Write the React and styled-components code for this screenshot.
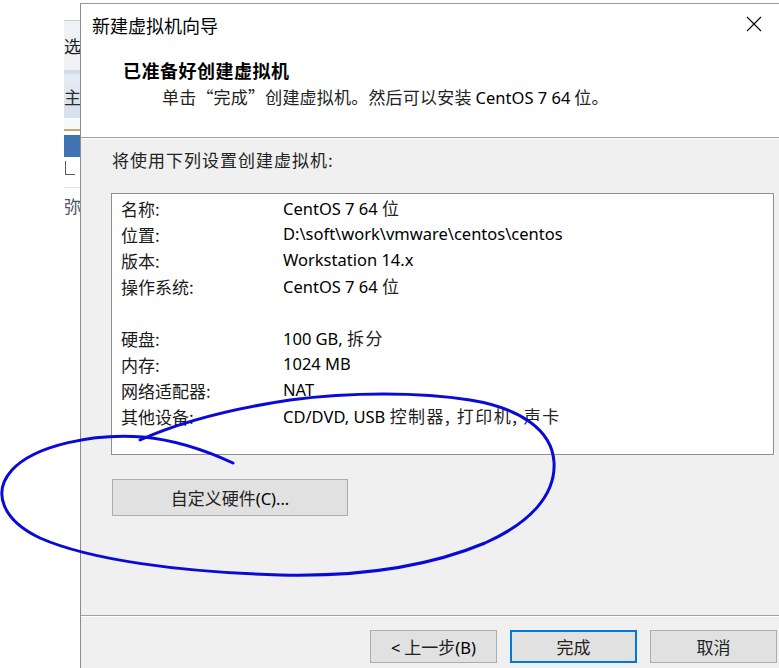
import React from 'react';
import styled, { createGlobalStyle } from 'styled-components';

const GlobalStyle = createGlobalStyle`
    html, body {
        margin: 0;
        padding: 0;
        background: #ffffff;
    }
    body {
        font-family: "Noto Sans", "Noto Sans CJK SC", sans-serif;
        overflow: hidden;
    }
`;

const cjk = `"Noto Sans CJK SC", "Noto Sans", sans-serif`;
const latin = `"Noto Sans", "Noto Sans CJK SC", sans-serif`;

const Screen = styled.div`
    position: relative;
    width: 779px;
    height: 668px;
    display: flex;
    flex-direction: row;
    overflow: hidden;
    background: #ffffff;
`;

/* the main window peeking out behind the wizard */
const Backdrop = styled.div`
    width: 80px;
    flex-shrink: 0;
    padding-left: 64px;
    box-sizing: border-box;
    padding-top: 20px;
`;

const BackWindow = styled.div`
    display: flex;
    flex-direction: column;
    border-top: 1px solid #c9cdd3;
    font-family: ${cjk};
    font-size: 17px;
    color: #1e1e1e;
`;

const BackRow = styled.div`
    height: ${(p) => p.h}px;
    display: flex;
    align-items: center;
    overflow: hidden;
    white-space: nowrap;
    background: ${(p) => p.bg || 'transparent'};
    border-bottom: ${(p) => p.line || 'none'};
    color: ${(p) => p.color || 'inherit'};
    line-height: 1;
`;

const CheckCorner = styled.span`
    width: 10px;
    height: 14px;
    border-left: 1px solid #5a5a5a;
    border-bottom: 1px solid #5a5a5a;
    box-sizing: border-box;
    margin-left: 1px;
`;

const Dialog = styled.div`
    flex: 1;
    margin-top: 3px;
    border-top: 1px solid #9a9a9a;
    border-left: 1px solid #8c8c8c;
    display: flex;
    flex-direction: column;
    background: #f0f0f0;
`;

const TitleBar = styled.div`
    height: 42px;
    background: #ffffff;
    display: flex;
    align-items: center;
    justify-content: space-between;
    padding: 0 5px 0 11px;
`;

const TitleText = styled.div`
    font-family: ${cjk};
    font-size: 18px;
    color: #000;
    line-height: 1;
`;

const CloseButton = styled.div`
    width: 40px;
    height: 30px;
    display: flex;
    align-items: center;
    justify-content: center;
    margin-top: -3px;
`;

const Header = styled.div`
    height: 91px;
    background: #ffffff;
    border-bottom: 1px solid #a0a0a0;
    display: flex;
    flex-direction: column;
`;

const Heading = styled.div`
    font-family: ${cjk};
    font-weight: 700;
    font-size: 18px;
    line-height: 20px;
    letter-spacing: 0.5px;
    color: #000;
    margin: 14px 0 0 42px;
`;

const SubHeading = styled.div`
    font-family: ${cjk};
    font-size: 17px;
    line-height: 20px;
    letter-spacing: 0.2px;
    color: #222;
    margin: 7px 0 0 81px;
    white-space: nowrap;

    span {
        font-family: ${latin};
        font-size: 16.5px;
        letter-spacing: 0;
        color: #000;
    }
`;

const Body = styled.div`
    flex: 1;
    display: flex;
    flex-direction: column;
    padding: 11px 5px 0 30px;
    border-top: 1px solid #ffffff;
`;

const Intro = styled.div`
    font-family: ${cjk};
    font-size: 17px;
    line-height: 20px;
    letter-spacing: 1px;
    color: #222;
    margin-left: 1px;
`;

const SummaryBox = styled.div`
    margin-top: 23px;
    height: 262px;
    background: #ffffff;
    border: 1px solid #8f8f8f;
    box-sizing: border-box;
    padding: 1px 0 0 9px;
    display: flex;
    flex-direction: column;
`;

const Row = styled.div`
    display: grid;
    grid-template-columns: 162px 1fr;
    height: 26px;
    align-items: center;
    white-space: nowrap;
`;

const Label = styled.div`
    font-family: ${cjk};
    font-size: 17px;
    color: #1a1a1a;
    line-height: 1;
`;

const Value = styled.div`
    font-family: ${latin};
    font-size: 16.5px;
    color: #000;
    line-height: 1;

    em {
        font-style: normal;
        font-family: ${cjk};
        font-size: 17px;
        letter-spacing: 1.5px;
        color: #222;
    }
`;

const Spacer = styled.div`
    height: ${(p) => p.h}px;
`;

const WideButton = styled.button`
    margin-top: 24px;
    width: 236px;
    height: 37px;
    margin-left: 1px;
    background: #e1e1e1;
    border: 1px solid #adadad;
    font-family: ${cjk};
    font-size: 17px;
    color: #222;
    padding: 0;
    cursor: default;

    span {
        font-family: ${latin};
        font-size: 16.5px;
        color: #000;
    }
`;

const Footer = styled.div`
    height: 53px;
    box-sizing: border-box;
    border-top: 1px solid #a0a0a0;
    box-shadow: inset 0 1px 0 #ffffff;
    display: flex;
    align-items: flex-start;
    padding: 14px 0 0 289px;
    gap: 13px;
`;

const NavButton = styled.button`
    width: 127px;
    height: 33px;
    flex-shrink: 0;
    background: #e1e1e1;
    border: ${(p) => (p.primary ? '2px solid #0078d7' : '1px solid #adadad')};
    box-sizing: border-box;
    font-family: ${cjk};
    font-size: 17px;
    color: #222;
    padding: 0;
    cursor: default;

    span {
        font-family: ${latin};
        font-size: 16.5px;
        color: #000;
    }
`;

const Annotation = styled.svg`
    position: absolute;
    left: 0;
    top: 0;
    pointer-events: none;
`;

const summary = [
    { label: '名称:', value: <>CentOS 7 64 <em>位</em></> },
    { label: '位置:', value: 'D:\\soft\\work\\vmware\\centos\\centos' },
    { label: '版本:', value: 'Workstation 14.x' },
    { label: '操作系统:', value: <>CentOS 7 64 <em>位</em></> },
    null,
    { label: '硬盘:', value: <>100 GB, <em>拆分</em></> },
    { label: '内存:', value: '1024 MB' },
    { label: '网络适配器:', value: 'NAT' },
    { label: '其他设备:', value: <>CD/DVD, USB <em>控制器, 打印机, 声卡</em></> },
];

const App = () => {
    return (
        <>
            <GlobalStyle />
            <Screen>
                <Backdrop>
                    <BackWindow>
                        <BackRow h={49} bg="#eef2f7">选</BackRow>
                        <BackRow h={4} bg="#d5dce6" />
                        <BackRow h={44} bg="linear-gradient(#e4ebf4, #d6e0ec)" color="#2a2a2a">主</BackRow>
                        <BackRow h={11} bg="#f7f9fb" />
                        <BackRow h={2} bg="#c9a27e" />
                        <BackRow h={4} bg="#ffffff" />
                        <BackRow h={22} bg="#3f73b3" />
                        <BackRow h={22} bg="#ffffff"><CheckCorner /></BackRow>
                        <BackRow h={8} bg="#ffffff" line="1px solid #e1e4e8" />
                        <BackRow h={34} bg="#ffffff" color="#4a5260">弥</BackRow>
                    </BackWindow>
                </Backdrop>

                <Dialog>
                    <TitleBar>
                        <TitleText>新建虚拟机向导</TitleText>
                        <CloseButton>
                            <svg width="16" height="16" viewBox="0 0 16 16">
                                <path d="M1 1 L15 15 M15 1 L1 15" stroke="#000" strokeWidth="1.1" fill="none" />
                            </svg>
                        </CloseButton>
                    </TitleBar>

                    <Header>
                        <Heading>已准备好创建虚拟机</Heading>
                        <SubHeading>
                            单击“完成”创建虚拟机。然后可以安装 <span>CentOS 7 64</span> 位。
                        </SubHeading>
                    </Header>

                    <Body>
                        <Intro>将使用下列设置创建虚拟机:</Intro>
                        <SummaryBox>
                            {summary.map((item, i) =>
                                item ? (
                                    <Row key={i}>
                                        <Label>{item.label}</Label>
                                        <Value>{item.value}</Value>
                                    </Row>
                                ) : (
                                    <Spacer key={i} h={26} />
                                )
                            )}
                        </SummaryBox>
                        <div>
                            <WideButton>自定义硬件<span>(C)...</span></WideButton>
                        </div>
                    </Body>

                    <Footer>
                        <NavButton><span>&lt;</span> 上一步<span>(B)</span></NavButton>
                        <NavButton primary>完成</NavButton>
                        <NavButton>取消</NavButton>
                    </Footer>
                </Dialog>

                {/* blue pen circle around the custom-hardware button */}
                <Annotation width="779" height="668" viewBox="0 0 779 668">
                    <path
                        d="M233 463 C205 450 175 440 143 437 C95 433 35 445 12 470 C-8 492 2 520 40 538 C90 560 180 572 280 575 C360 577 430 566 485 543 C530 523 556 495 554 462 C552 430 520 408 470 400 C420 392 350 392 290 400 C230 409 180 422 140 440"
                        stroke="#0a0ad8"
                        strokeWidth="3"
                        fill="none"
                        strokeLinecap="round"
                    />
                </Annotation>
            </Screen>
        </>
    );
};

export default App;
